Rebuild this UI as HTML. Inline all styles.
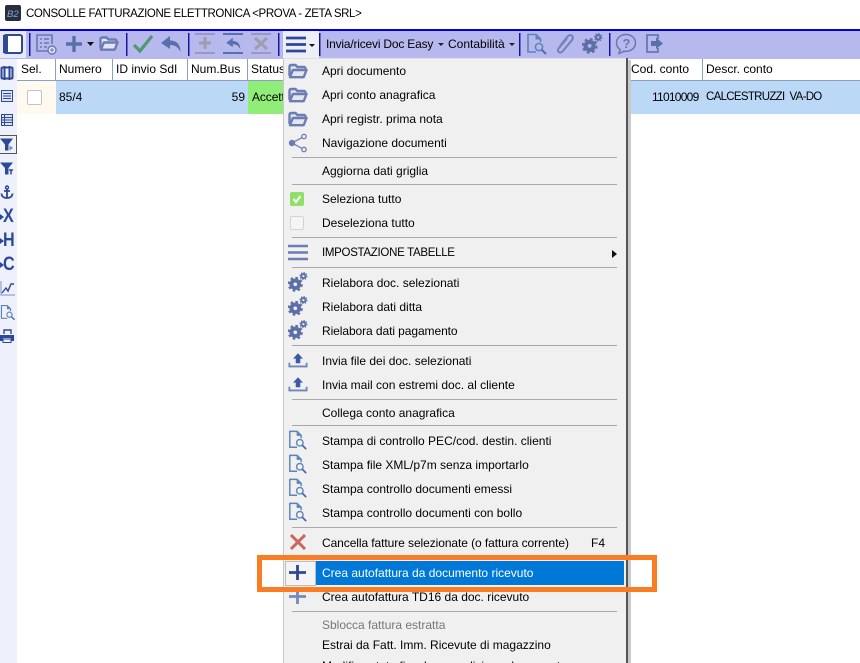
<!DOCTYPE html>
<html><head><meta charset="utf-8">
<style>
html,body{margin:0;padding:0;background:#fff}
#p{position:relative;width:860px;height:663px;overflow:hidden;background:#fff;font-family:"Liberation Sans",sans-serif;font-size:12px;color:#000}
#p div,#p span,#p svg{position:absolute}
.t{white-space:nowrap;line-height:16px;height:16px}
.h{top:61px}
.sep{left:292px;width:325px;height:1px;background:#a8a8a8}
.vs{width:2px;top:33px;height:23px;background:linear-gradient(90deg,#1414a0 50%,#6a6ac8 50%)}
.vc{width:1px;top:59px;height:22px;background:#8ba0c0}
.L{font-weight:bold;font-size:19px;line-height:20px;color:#2c4896;transform:scaleX(.85);transform-origin:left center}
</style></head><body>
<div id="p">
<svg width="0" height="0" style="left:0;top:0">
<defs>
<symbol id="folder" viewBox="0 0 20 16"><path d="M1.500 13V3.500A1.500 1.500 0 0 1 3 2H7.500L9.500 4H16A1.500 1.500 0 0 1 17.500 5.500V7" fill="#e3e5ef" stroke="#6c7cb4" stroke-width="2.400"/><path d="M2 14.200L4.800 7H18.500L16.200 13A1.500 1.500 0 0 1 14.800 14.200Z" fill="#e3e5ef" stroke="#6c7cb4" stroke-width="2.400" stroke-linejoin="round"/></symbol>
<symbol id="gears" viewBox="0 0 22 22"><circle cx="8" cy="13.500" r="4.200" fill="none" stroke="#5d6fa8" stroke-width="4.400"/><circle cx="8" cy="13.500" r="7.200" fill="none" stroke="#5d6fa8" stroke-width="2.200" stroke-dasharray="2.900 2.750"/><circle cx="17" cy="4.500" r="2.300" fill="none" stroke="#5d6fa8" stroke-width="2.200"/><circle cx="17" cy="4.500" r="3.900" fill="none" stroke="#5d6fa8" stroke-width="1.200" stroke-dasharray="1.500 1.560"/></symbol>
<symbol id="upl" viewBox="0 0 22 18"><path d="M11 1L16.500 7H13.500V12H8.500V7H5.500Z" fill="#3d5aa6"/><path d="M1.500 11.500V15.500H20.500V11.500" fill="none" stroke="#6f86bb" stroke-width="2"/></symbol>
<symbol id="prev" viewBox="0 0 22 22"><path d="M10 19H2V1.500H10L14.500 6V9" fill="none" stroke="#5c84b8" stroke-width="1.600"/><path d="M9.500 1.500V6.500H14.500Z" fill="#5c84b8"/><circle cx="13" cy="14" r="3.600" fill="none" stroke="#5c84b8" stroke-width="1.500"/><path d="M15.800 16.800L20 21" stroke="#4a6ea8" stroke-width="2"/></symbol>
</defs>
</svg>

<!-- title bar -->
<svg style="left:5px;top:5px" width="16" height="16" viewBox="0 0 16 16"><rect width="16" height="16" rx="2" fill="#2a2d3e"/><text x="2" y="12" font-family="Liberation Sans" font-size="9.500" font-style="italic" fill="#7fa8d8">B2</text></svg>
<div class="t" style="left:26px;top:6px;font-size:11.500px;letter-spacing:-.37px">CONSOLLE FATTURAZIONE ELETTRONICA &lt;PROVA - ZETA SRL&gt;</div>

<!-- toolbar -->
<div style="left:0;top:29px;width:860px;height:2px;background:#0000e6"></div>
<div style="left:0;top:31px;width:860px;height:28px;background:#b6b8ee"></div>
<div style="left:0;top:31px;width:26px;height:27px;background:#e8e9f8"></div>
<svg style="left:2px;top:33px" width="22" height="22" viewBox="0 0 22 22"><rect x="2" y="2" width="18" height="18" rx="2" fill="#fff" stroke="#2f4a94" stroke-width="2"/><rect x="1" y="2" width="5" height="18" fill="#2f4a94"/></svg>
<div class="vs" style="left:29px"></div>
<div class="vs" style="left:126px"></div>
<div class="vs" style="left:188px"></div>
<div class="vs" style="left:278px"></div>
<div class="vs" style="left:319px"></div>
<div class="vs" style="left:519px"></div>
<div class="vs" style="left:609px"></div>

<svg style="left:35px;top:33px" width="22" height="23" viewBox="0 0 22 23"><path d="M14 18H2V2H17V11" fill="none" stroke="#6878b0" stroke-width="1.600"/><path d="M5 6H7M9 6H14M5 10H7M9 10H14M5 14H7M9 14H12" stroke="#6878b0" stroke-width="1.500"/><circle cx="17" cy="17" r="4" fill="#dfe2f4" stroke="#6878b0" stroke-width="1.400"/><path d="M15 17H19M17 15V19" stroke="#6878b0"/></svg>
<svg style="left:65px;top:35px" width="18" height="18" viewBox="0 0 18 18"><path d="M9 1V17M1 9H17" stroke="#5a70aa" stroke-width="3.400"/></svg>
<svg style="left:87px;top:42px" width="7" height="4" viewBox="0 0 7 4"><path d="M0 0H7L3.500 4Z" fill="#111"/></svg>
<svg style="left:99px;top:35px" width="20" height="17" viewBox="0 0 20 16"><use href="#folder"/></svg>
<svg style="left:132px;top:33px" width="22" height="22" viewBox="0 0 22 22"><path d="M2 12L8 18L20 3" fill="none" stroke="#4f9a6e" stroke-width="3.200"/></svg>
<svg style="left:160px;top:35px" width="22" height="18" viewBox="0 0 22 18"><path d="M10 1L1 8L10 14V10C15 10 18 12 20.500 17C20.500 10 17 5.500 10 5.500Z" fill="#5a70aa"/></svg>
<div style="left:195px;top:33px;width:20px;height:2px;background:#9a9ab8"></div>
<div style="left:195px;top:52px;width:20px;height:2px;background:#9a9ab8"></div>
<svg style="left:198px;top:36px" width="14" height="14" viewBox="0 0 14 14"><path d="M7 1V13M1 7H13" stroke="#9d9dac" stroke-width="3"/></svg>
<div style="left:223px;top:33px;width:20px;height:2px;background:#5a70aa"></div>
<div style="left:223px;top:52px;width:20px;height:2px;background:#5a70aa"></div>
<svg style="left:225px;top:37px" width="17" height="13" viewBox="0 0 22 18"><path d="M10 1L1 8L10 14V10C15 10 18 12 20.500 17C20.500 10 17 5.500 10 5.500Z" fill="#5a70aa"/></svg>
<div style="left:251px;top:33px;width:20px;height:2px;background:#9a9ab8"></div>
<div style="left:251px;top:52px;width:20px;height:2px;background:#9a9ab8"></div>
<svg style="left:254px;top:37px" width="14" height="13" viewBox="0 0 14 13"><path d="M1 1L13 12M13 1L1 12" stroke="#9d9dac" stroke-width="3"/></svg>

<!-- hamburger btn -->
<div style="left:283px;top:31px;width:36px;height:27px;background:#edeef8"></div>
<svg style="left:286px;top:36px" width="20" height="17" viewBox="0 0 20 17"><path d="M0 2H20M0 8.500H20M0 15H20" stroke="#2c4896" stroke-width="2.800"/></svg>
<svg style="left:309px;top:44px" width="6" height="3" viewBox="0 0 6 3"><path d="M0 0H6L3 3Z" fill="#111"/></svg>

<div class="t" style="left:326px;top:36px;letter-spacing:-.2px">Invia/ricevi Doc Easy</div>
<svg style="left:438px;top:43px" width="6" height="3" viewBox="0 0 6 3"><path d="M0 0H6L3 3Z" fill="#222"/></svg>
<div class="t" style="left:448px;top:36px">Contabilità</div>
<svg style="left:509px;top:43px" width="6" height="3" viewBox="0 0 6 3"><path d="M0 0H6L3 3Z" fill="#222"/></svg>

<svg style="left:526px;top:33px" width="22" height="22" viewBox="0 0 22 22"><use href="#prev"/></svg>
<svg style="left:555px;top:33px" width="20" height="22" viewBox="0 0 20 22"><path d="M5 13L13 3C15.800 .5 19.500 3.500 17 7L7.500 18.500C5.300 21 1.500 18.500 3.500 15.500L12 5.500" fill="none" stroke="#7282b8" stroke-width="2"/></svg>
<svg style="left:582px;top:33px" width="21" height="21" viewBox="0 0 22 22"><use href="#gears"/></svg>
<svg style="left:615px;top:33px" width="22" height="22" viewBox="0 0 22 22"><path d="M11 1.500C5.500 1.500 1.500 5 1.500 10C1.500 13 3 15 5 16.500L4 20.500L9 18.300C15 19 20.500 15.500 20.500 10C20.500 5 16.500 1.500 11 1.500Z" fill="none" stroke="#6878b0" stroke-width="1.500"/><text x="7.500" y="15" font-family="Liberation Sans" font-weight="bold" font-size="13" fill="#6878b0">?</text></svg>
<svg style="left:645px;top:33px" width="20" height="21" viewBox="0 0 20 21"><path d="M13 6V2H2V19H13V15" fill="none" stroke="#6878b0" stroke-width="1.800"/><path d="M6 8H11V4.500L18 10.500L11 16V13H6Z" fill="#5a70aa"/></svg>

<!-- left sidebar -->
<div style="left:0;top:59px;width:17px;height:604px;background:#eef1fb"></div>
<svg style="left:0;top:66px" width="14" height="14" viewBox="0 0 14 14"><rect x="1.500" y="1.500" width="11" height="11" rx="1" fill="none" stroke="#2c4896" stroke-width="2"/><path d="M4.500 0V14M9.500 0V14" stroke="#2c4896" stroke-width="2"/></svg>
<svg style="left:0;top:89px" width="14" height="14" viewBox="0 0 14 14"><rect x="1.500" y="1.500" width="11" height="11" fill="#dbe3f7" stroke="#2c4896"/><path d="M3 4.500H11M3 7H11M3 9.500H11" stroke="#2c4896"/></svg>
<svg style="left:0;top:113px" width="14" height="14" viewBox="0 0 14 14"><rect x="1.500" y="1.500" width="11" height="11" fill="#dbe3f7" stroke="#2c4896"/><path d="M1 4.500H13M1 7H13M1 9.500H13M4.500 1V13" stroke="#2c4896"/></svg>
<div style="left:0;top:135px;width:17px;height:19px;border:1px solid #555;border-left:0;box-sizing:border-box"></div>
<svg style="left:0;top:137px" width="14" height="15" viewBox="0 0 14 14"><path d="M0 1H13L8.500 7V13H5V7Z" fill="#2c4896"/><path d="M9.500 8L13 10.500L9.500 13Z" fill="#6e83bc"/></svg>
<svg style="left:0;top:161px" width="14" height="15" viewBox="0 0 14 14"><path d="M0 1H13L8.500 6.500V13H5V6.500Z" fill="#2c4896"/><path d="M9 8.500H13M11 8.500V13" stroke="#2c4896" stroke-width="1.500"/></svg>
<svg style="left:0;top:185px" width="14" height="15" viewBox="0 0 14 15"><circle cx="7" cy="2.500" r="1.500" fill="none" stroke="#2c4896" stroke-width="1.400"/><path d="M7 4V13M4 6H10M1.500 8.500C1.500 11.500 4 13 7 13C10 13 12.500 11.500 12.500 8.500" fill="none" stroke="#2c4896" stroke-width="1.800"/></svg>
<svg style="left:0;top:213px" width="4" height="8" viewBox="0 0 4 8"><path d="M0 1L4 4L0 7Z" fill="#2c4896"/></svg>
<div class="L" style="left:3px;top:207px">X</div>
<svg style="left:0;top:237px" width="4" height="8" viewBox="0 0 4 8"><path d="M0 1L4 4L0 7Z" fill="#2c4896"/></svg>
<div class="L" style="left:3px;top:231px">H</div>
<svg style="left:0;top:261px" width="4" height="8" viewBox="0 0 4 8"><path d="M0 1L4 4L0 7Z" fill="#2c4896"/></svg>
<div class="L" style="left:3px;top:255px">C</div>
<svg style="left:0;top:280px" width="16" height="17" viewBox="0 0 16 17"><path d="M1 1V15H15" fill="none" stroke="#7c8dc0" stroke-width="1"/><path d="M2 13L6 8L8 11L11 4H14" fill="none" stroke="#2c4896" stroke-width="1.400"/></svg>
<svg style="left:0;top:304px" width="16" height="17" viewBox="0 0 22 22"><use href="#prev"/></svg>
<svg style="left:0;top:329px" width="15" height="15" viewBox="0 0 15 15"><path d="M4 5V1H11V5" fill="none" stroke="#2c4896" stroke-width="1.400"/><path d="M0 6H14V12H11V9H3V12H0Z" fill="#2c4896"/><rect x="3" y="10" width="8" height="3.500" fill="none" stroke="#2c4896"/></svg>

<!-- grid -->
<div style="left:17px;top:80px;width:843px;height:1px;background:#8ba0c0"></div>
<div class="vc" style="left:55px"></div>
<div class="vc" style="left:112px"></div>
<div class="vc" style="left:187px"></div>
<div class="vc" style="left:247px"></div>
<div class="vc" style="left:702px"></div>
<div class="t h" style="left:21px">Sel.</div>
<div class="t h" style="left:59px">Numero</div>
<div class="t h" style="left:116px">ID invio SdI</div>
<div class="t h" style="left:191px">Num.Bus</div>
<div class="t h" style="left:251px">Status</div>
<div class="t h" style="left:631px">Cod. conto</div>
<div class="t h" style="left:706px">Descr. conto</div>
<div style="left:17px;top:81px;width:39px;height:33px;background:#fff9f0"></div>
<div style="left:56px;top:81px;width:804px;height:33px;background:#bbd9f7"></div>
<div style="left:248px;top:81px;width:35px;height:33px;background:#90ee78"></div>
<div style="left:27px;top:90px;width:13px;height:13px;background:#fff;border:1px solid #c4c4c4;border-radius:2px"></div>
<div class="t" style="left:59px;top:89px">85/4</div>
<div class="t" style="left:205px;top:89px;width:40px;text-align:right">59</div>
<div class="t" style="left:252px;top:89px;width:31px;overflow:hidden;letter-spacing:-.1px">Accettata</div>
<div class="t" style="left:652px;top:89px;letter-spacing:-.75px">11010009</div>
<div class="t" style="left:706px;top:89px;font-size:11.500px;letter-spacing:-.7px">CALCESTRUZZI&nbsp; VA-DO</div>

<!-- menu -->
<div style="left:283px;top:58px;width:343px;height:605px;background:#f0f0f0;border-left:1px solid #c8c8c8;border-top:1px solid #e0e0e0;box-sizing:content-box"></div>
<div style="left:626px;top:58px;width:2px;height:605px;background:#555"></div>
<div style="left:628px;top:60px;width:3px;height:603px;background:#c9c9c9"></div>

<svg style="left:288px;top:63px" width="20" height="16" viewBox="0 0 20 16"><use href="#folder"/></svg>
<svg style="left:288px;top:87px" width="20" height="16" viewBox="0 0 20 16"><use href="#folder"/></svg>
<svg style="left:288px;top:111px" width="20" height="16" viewBox="0 0 20 16"><use href="#folder"/></svg>
<svg style="left:288px;top:133px" width="20" height="20" viewBox="0 0 20 20"><path d="M4 10L16 3.500M4 10L16 16.500" stroke="#7688bc" stroke-width="1.300"/><circle cx="4" cy="10" r="3.200" fill="#6c7cb4"/><circle cx="16" cy="3.500" r="2.200" fill="#f0f0f0" stroke="#6c7cb4" stroke-width="1.300"/><circle cx="16" cy="16.500" r="2.200" fill="#f0f0f0" stroke="#6c7cb4" stroke-width="1.300"/></svg>
<div class="t" style="left:322px;top:63px">Apri documento</div>
<div class="t" style="left:322px;top:87px">Apri conto anagrafica</div>
<div class="t" style="left:322px;top:111px">Apri registr. prima nota</div>
<div class="t" style="left:322px;top:135px">Navigazione documenti</div>
<div class="sep" style="top:157px"></div>
<div class="t" style="left:322px;top:163px">Aggiorna dati griglia</div>
<div class="sep" style="top:184px"></div>
<div style="left:290px;top:192px;width:14px;height:14px;background:#8ee06a;border-radius:2px"></div>
<svg style="left:290px;top:192px" width="14" height="14" viewBox="0 0 14 14"><path d="M3.500 7L6 10L10.500 4" fill="none" stroke="#fff" stroke-width="2"/></svg>
<div style="left:290px;top:216px;width:12px;height:12px;background:#f5f5f5;border:1px solid #d5d5d5;border-radius:2px"></div>
<div class="t" style="left:322px;top:191px">Seleziona tutto</div>
<div class="t" style="left:322px;top:215px">Deseleziona tutto</div>
<div class="sep" style="top:237px"></div>
<svg style="left:288px;top:244px" width="20" height="17" viewBox="0 0 20 17"><path d="M0 2H20M0 8.500H20M0 15H20" stroke="#6c7cb4" stroke-width="2.400"/></svg>
<div class="t" style="left:322px;top:245px;font-size:11.500px;letter-spacing:-.3px">IMPOSTAZIONE TABELLE</div>
<svg style="left:612px;top:250px" width="5" height="8" viewBox="0 0 5 8"><path d="M0 0L5 4L0 8Z" fill="#111"/></svg>
<div class="sep" style="top:267px"></div>
<svg style="left:288px;top:272px" width="20" height="20" viewBox="0 0 22 22"><use href="#gears"/></svg>
<svg style="left:288px;top:296px" width="20" height="20" viewBox="0 0 22 22"><use href="#gears"/></svg>
<svg style="left:288px;top:320px" width="20" height="20" viewBox="0 0 22 22"><use href="#gears"/></svg>
<div class="t" style="left:322px;top:275px">Rielabora doc. selezionati</div>
<div class="t" style="left:322px;top:299px">Rielabora dati ditta</div>
<div class="t" style="left:322px;top:323px;letter-spacing:-.08px">Rielabora dati pagamento</div>
<div class="sep" style="top:345px"></div>
<svg style="left:288px;top:352px" width="20" height="17" viewBox="0 0 22 18"><use href="#upl"/></svg>
<svg style="left:288px;top:376px" width="20" height="17" viewBox="0 0 22 18"><use href="#upl"/></svg>
<div class="t" style="left:322px;top:353px">Invia file dei doc. selezionati</div>
<div class="t" style="left:322px;top:377px">Invia mail con estremi doc. al cliente</div>
<div class="sep" style="top:399px"></div>
<div class="t" style="left:322px;top:405px">Collega conto anagrafica</div>
<div class="sep" style="top:425px"></div>
<svg style="left:288px;top:430px" width="20" height="20" viewBox="0 0 22 22"><use href="#prev"/></svg>
<svg style="left:288px;top:454px" width="20" height="20" viewBox="0 0 22 22"><use href="#prev"/></svg>
<svg style="left:288px;top:478px" width="20" height="20" viewBox="0 0 22 22"><use href="#prev"/></svg>
<svg style="left:288px;top:502px" width="20" height="20" viewBox="0 0 22 22"><use href="#prev"/></svg>
<div class="t" style="left:322px;top:433px">Stampa di controllo PEC/cod. destin. clienti</div>
<div class="t" style="left:322px;top:457px">Stampa file XML/p7m senza importarlo</div>
<div class="t" style="left:322px;top:481px">Stampa controllo documenti emessi</div>
<div class="t" style="left:322px;top:505px">Stampa controllo documenti con bollo</div>
<div class="sep" style="top:527px"></div>
<svg style="left:290px;top:534px" width="16" height="16" viewBox="0 0 16 16"><path d="M1 1L15 15M15 1L1 15" stroke="#c8695f" stroke-width="3"/></svg>
<div class="t" style="left:322px;top:535px;letter-spacing:-.08px">Cancella fatture selezionate (o fattura corrente)</div>
<div class="t" style="left:591px;top:535px">F4</div>

<div style="left:285px;top:561px;width:29px;height:23px;background:#f4f4f4;border:1px solid #bdbdbd"></div>
<svg style="left:289px;top:565px" width="17" height="15" viewBox="0 0 17 15"><path d="M8.500 0V15M0 7.500H17" stroke="#2c4896" stroke-width="2.800"/></svg>
<div style="left:316px;top:561px;width:308px;height:24px;background:#0078d7"></div>
<div class="t" style="left:322px;top:565px;color:#fff">Crea autofattura da documento ricevuto</div>
<svg style="left:289px;top:589px" width="17" height="15" viewBox="0 0 17 15"><path d="M8.500 0V15M0 7.500H17" stroke="#7688bc" stroke-width="2.800"/></svg>
<div class="t" style="left:322px;top:589px">Crea autofattura TD16 da doc. ricevuto</div>
<div class="sep" style="top:611px"></div>
<div class="t" style="left:322px;top:617px;color:#777">Sblocca fattura estratta</div>
<div class="t" style="left:322px;top:637px">Estrai da Fatt. Imm. Ricevute di magazzino</div>
<div class="t" style="left:322px;top:658px">Modifica stato fiscale e condizione documento</div>

<!-- orange highlight -->
<div style="left:257px;top:555px;width:400px;height:37px;box-sizing:border-box;border:5px solid #fb7d23"></div>
</div>
</body></html>
